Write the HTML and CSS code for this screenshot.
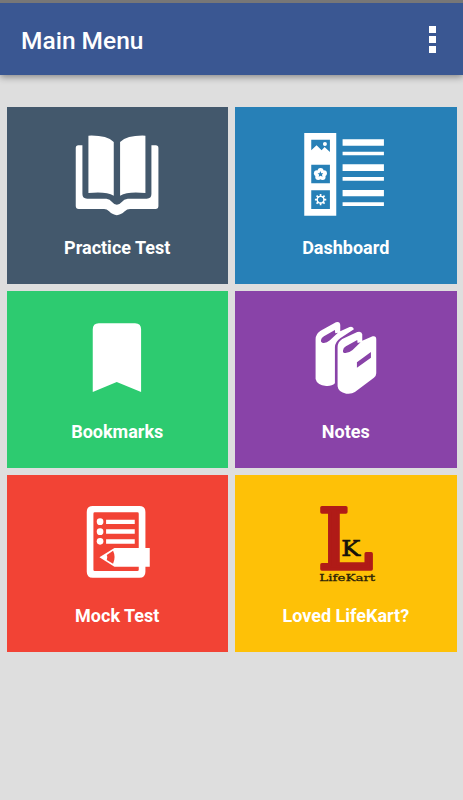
FILE: index.html
```html
<!DOCTYPE html>
<html lang="en">
<head>
    <meta charset="UTF-8">
    <meta name="viewport" content="width=device-width, initial-scale=1.0">
    <title>Main Menu</title>
    <link rel="stylesheet" href="styles.css">
</head>
<body>

<header class="toolbar">
    <h1 class="title">Main Menu</h1>
    <div class="overflow">
        <span class="dot"></span>
        <span class="dot"></span>
        <span class="dot"></span>
    </div>
</header>

<main class="menu">
    <div class="tile practice">
        <svg class="icon" viewBox="21.75 21 300 300" fill="#fff">
            <path d="M86 47Q140 45 162 66V227Q138 213 86 219ZM181 66Q204 45 257 47V219Q205 213 181 227Z"/>
            <path d="M56 76H68V222Q68 236 82 236H140Q151 237 156 245Q171 263 187 245Q192 237 204 236H261Q275 236 275 222V76H288Q296 76 296 84V258Q296 267 287 267H211Q202 267 195 274Q171 297 148 274Q141 267 133 267H57Q48 267 48 258V84Q48 76 56 76Z"/>
        </svg>
        <div class="label">Practice Test</div>
    </div>

    <div class="tile dashboard">
        <svg class="icon" viewBox="17.25 21 300 300" fill="#fff">
            <path d="M42 39H138V287H42Z"/>
            <path d="M157 58H281V77H157ZM157 95H281V106H157ZM157 133H281V153H157ZM157 171H281V182H157ZM157 210H281V229H157ZM157 247H281V258H157Z"/>
            <g class="cutout">
                <path d="M63 59H119V96L103 81L94 91L79 76L63 91Z"/>
                <path d="M63 134H119V190H63ZM63 211H119V267H63Z"/>
            </g>
            <circle cx="104" cy="72" r="6"/>
            <circle cx="91" cy="153" r="9"/>
            <circle cx="101" cy="160" r="9"/>
            <circle cx="97" cy="171" r="9"/>
            <circle cx="84" cy="171" r="9"/>
            <circle cx="80" cy="160" r="9"/>
            <path class="cutout" d="M90 153L93 160L99 160L95 164L97 170L91 167L85 170L87 164L82 160L88 160Z"/>
            <circle cx="91" cy="239" r="10" fill="none" stroke="#fff" stroke-width="4"/>
            <path d="M91 222V230M91 248V256M74 239H82M100 239H108M79 227L85 233M97 245L103 251M103 227L97 233M85 245L79 251" stroke="#fff" stroke-width="5"/>
        </svg>
        <div class="label">Dashboard</div>
    </div>

    <div class="tile bookmarks">
        <svg class="icon" viewBox="21.75 3 300 300" fill="#fff">
            <path d="M99 58Q99 40 117 40H226Q244 40 244 58V246L171 216L99 246Z"/>
        </svg>
        <div class="label">Bookmarks</div>
    </div>

    <div class="tile notes">
        <svg class="icon" viewBox="17.25 3 300 300" fill="#fff">
            <path d="M76 88Q76 71 91 62L137 37Q149 33 150 45V64L178 51Q189 48 191 58L151 84Q134 96 134 112V220Q125 229 108 228Q80 225 76 207Z"/>
            <path d="M142 112Q142 96 156 87L201 66Q214 62 216 73V92L247 79Q258 76 258 88V190Q258 198 251 203L194 246Q184 253 168 251Q144 247 142 229Z"/>
            <path class="cutout" d="M92 91Q93 83 101 79L134 60L135 70L143 68L119 91Q107 101 96 98Q91 96 92 91ZM158 122Q159 113 167 109L201 90L202 99L211 97L187 120Q174 131 162 129Q157 127 158 122ZM200 157L242 126V143L200 173Z"/>
        </svg>
        <div class="label">Notes</div>
    </div>

    <div class="tile mock">
        <svg class="icon" viewBox="21.75 0 300 300" fill="#fff">
            <path fill-rule="evenodd" d="M99 33H239Q257 33 257 51V230Q257 248 239 248H99Q81 248 81 230V51Q81 33 99 33ZM105 52Q101 52 101 56V224Q101 228 105 228H233Q237 228 237 224V56Q237 52 233 52Z"/>
            <circle cx="121" cy="80" r="10"/>
            <circle cx="121" cy="110" r="10"/>
            <circle cx="121" cy="139" r="10"/>
            <path d="M139 74H225V87H139ZM139 103H225V116H139ZM139 133H225V146H139Z"/>
            <path d="M119 187L164 159H270V215H164Z"/>
            <path class="cutout" d="M141 180L160 167Q169 186 160 206L141 195Q145 187 141 180Z"/>
        </svg>
        <div class="label">Mock Test</div>
    </div>

    <div class="tile loved">
        <svg class="icon" viewBox="62.25 0 300 300">
            <text class="logo-l" x="126" y="221" textLength="168" lengthAdjust="spacingAndGlyphs">L</text>
            <text class="logo-k" x="198" y="182" textLength="57" lengthAdjust="spacingAndGlyphs">K</text>
            <text class="logo-name" x="132" y="257" textLength="168" lengthAdjust="spacingAndGlyphs">LifeKart</text>
        </svg>
        <div class="label">Loved LifeKart?</div>
    </div>
</main>

</body>
</html>
```

FILE: styles.css
```css
body {
    margin: 0;
    min-height: 100vh;
    box-sizing: border-box;
    border-top: 3px solid #777;
    background-color: #dedede;
    font-family: Roboto, sans-serif;
}

.toolbar {
    display: flex;
    justify-content: space-between;
    align-items: center;
    height: 72px;
    padding: 0 27px 0 21px;
    box-sizing: border-box;
    background-color: #3a5792;
    box-shadow: 0 2px 7px rgba(0, 0, 0, 0.4);
}

.title {
    margin: 2px 0 0;
    color: #fff;
    font-size: 24.5px;
    font-weight: 500;
}

.overflow {
    display: grid;
    gap: 3px;
}

.dot {
    width: 7px;
    height: 7px;
    background-color: #fff;
}

.menu {
    display: grid;
    grid-template-columns: 1fr 1fr;
    grid-auto-rows: 177px;
    gap: 7px;
    padding: 32px 6.5px 0;
}

.tile {
    display: flex;
    flex-direction: column;
    align-items: center;
    padding-top: 20px;
    box-sizing: border-box;
}

.icon {
    width: 100px;
    height: 100px;
    overflow: visible;
}

.label {
    margin-top: 10px;
    color: #fff;
    font-size: 18px;
    font-weight: 700;
    line-height: 21px;
}

.practice {
    background-color: #43586c;
}

.dashboard {
    background-color: #2780b7;
}

.dashboard .cutout {
    fill: #2780b7;
}

.bookmarks {
    background-color: #2dcb70;
}

.notes {
    background-color: #8943a8;
}

.notes .cutout {
    fill: #8943a8;
}

.mock {
    background-color: #f24335;
}

.mock .cutout {
    fill: #f24335;
}

.loved {
    background-color: #fec107;
}

.logo-l {
    fill: #b01b17;
    stroke: #b01b17;
    stroke-width: 10px;
    stroke-linejoin: round;
    font: 250px "DejaVu Serif", serif;
}

.logo-k {
    fill: #15120a;
    stroke: #15120a;
    stroke-width: 2px;
    font: 68px "DejaVu Serif", serif;
}

.logo-name {
    fill: #2b2208;
    stroke: #2b2208;
    stroke-width: 0.8px;
    font: 27px "DejaVu Serif", serif;
}
```
